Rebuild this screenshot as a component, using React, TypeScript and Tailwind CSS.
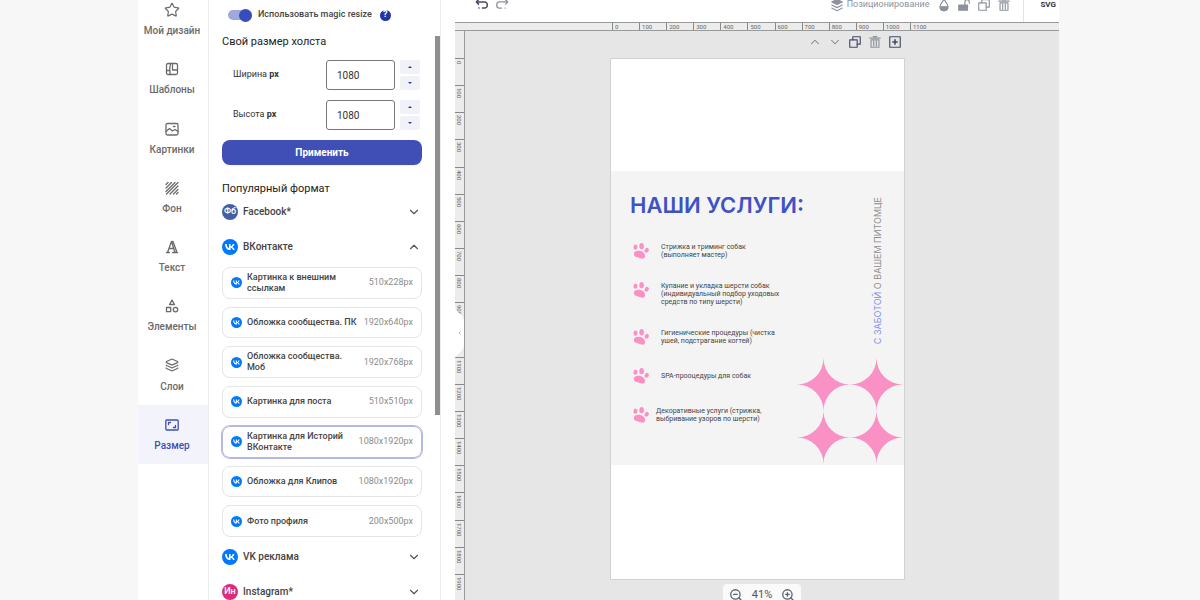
import { useState } from "react";
import type { ReactNode } from "react";
import { ChevronDown, ChevronUp, Layers, Star, ZoomIn, ZoomOut } from "lucide-react";

type Format = { title: string; size: string };

const vkFormats: Format[] = [
  { title: "Картинка к внешним\nссылкам", size: "510x228px" },
  { title: "Обложка сообщества. ПК", size: "1920x640px" },
  { title: "Обложка сообщества.\nМоб", size: "1920x768px" },
  { title: "Картинка для поста", size: "510x510px" },
  { title: "Картинка для Историй\nВКонтакте", size: "1080x1920px" },
  { title: "Обложка для Клипов", size: "1080x1920px" },
  { title: "Фото профиля", size: "200x500px" },
];

const services = [
  "Стрижка и триминг собак\n(выполняет мастер)",
  "Купание и укладка шерсти собак\n(индивидуальный подбор уходовых\nсредств по типу шерсти)",
  "Гигиенические процедуры (чистка\nушей, подстрагание когтей)",
  "SPA-прооцедуры для собак",
  "Декоративные услуги (стрижка,\nвыбривание узоров по шерсти)",
];

const columnTicks = Array.from({ length: 12 }, (_, i) => i * 100);
const rowTicks = Array.from({ length: 20 }, (_, i) => i * 100);

function Icon({ children, className = "size-4" }: { children: ReactNode; className?: string }) {
  return (
    <svg
      viewBox="0 0 16 16"
      className={className}
      fill="none"
      stroke="currentColor"
      strokeWidth="1.3"
      strokeLinecap="round"
      strokeLinejoin="round"
      aria-hidden="true"
    >
      {children}
    </svg>
  );
}

const menu = [
  { label: "Мой дизайн", icon: <Star className="size-4" strokeWidth={1.8} /> },
  {
    label: "Шаблоны",
    icon: (
      <Icon>
        <rect x="2.5" y="2.5" width="11" height="11" rx="1.5" />
        <path d="M8.5 2.5v6.500h5M6.500 2.500L5.500 9.500M2.500 9.500h3.500v4" />
      </Icon>
    ),
  },
  {
    label: "Картинки",
    icon: (
      <Icon>
        <rect x="2" y="2.5" width="12" height="11.5" rx="1.5" />
        <path d="M2 10.5l3.5-3 3 2.500 2.500-1.500 3 2" />
        <path d="M9.500 5.500h1.500" />
      </Icon>
    ),
  },
  {
    label: "Фон",
    icon: (
      <Icon>
        <path d="M2 4.500L4 2.500M2 8L7.500 2.500M2 11.500L11 2.500M2.500 14L14 2.500M6 14L14 6M9.500 14L14 9.500M12.500 14L14 12.500" />
      </Icon>
    ),
  },
  {
    label: "Текст",
    icon: (
      <Icon>
        <path d="M2.500 13.500h3M3.500 13.500L7.500 2.500h1.500L13 13.500M8.500 13.500h5M7.500 2.500L11 13.500M5 9.500h4.500" />
      </Icon>
    ),
  },
  {
    label: "Элементы",
    icon: (
      <Icon>
        <path d="M8 2L10.500 6.500h-5z" />
        <rect x="2.500" y="9.500" width="4.200" height="4.200" />
        <circle cx="11.500" cy="11.600" r="2.200" />
      </Icon>
    ),
  },
  { label: "Слои", icon: <Layers className="size-3.5" strokeWidth={2} /> },
  {
    label: "Размер",
    icon: (
      <Icon>
        <rect x="1.800" y="3" width="12.400" height="10" rx="1" />
        <path d="M4.500 7.500V5.500h2M11.500 8.500v2h-2" />
      </Icon>
    ),
  },
];

function CopyIcon({ className }: { className?: string }) {
  return (
    <Icon className={className}>
      <rect x="2" y="5.500" width="8.500" height="8.500" />
      <path d="M5.500 5.500V2h8.500v8.500h-3.500" />
    </Icon>
  );
}

function TrashIcon({ className }: { className?: string }) {
  return (
    <Icon className={className}>
      <path d="M2 3.500h12M6 1.800h4M3.500 5.500h9v8.500h-9zM6.500 7v5.500M9.500 7v5.500" />
    </Icon>
  );
}

function VkBadge({ className }: { className: string }) {
  return (
    <svg viewBox="0 0 24 24" className={`shrink-0 ${className}`} aria-hidden="true">
      <circle cx="12" cy="12" r="12" fill="#0077ff" />
      <path
        transform="translate(3.200 3.900) scale(.73)"
        fill="#fff"
        d="M12.790 17.290C5.950 17.290 2.060 12.610 1.900 4.810h3.420c.11 5.730 2.630 8.150 4.630 8.650V4.810h3.220v4.940c1.980-.21 4.060-2.460 4.760-4.940h3.230c-.54 3.060-2.800 5.310-4.410 6.240 1.610.75 4.180 2.720 5.160 6.240h-3.560c-.76-2.380-2.670-4.220-5.180-4.470v4.470z"
      />
    </svg>
  );
}

function Paw() {
  return (
    <svg viewBox="0 0 16 16" className="size-4 shrink-0" fill="#f991c5" aria-hidden="true">
      <ellipse cx="2.500" cy="4.200" rx="2" ry="2.600" transform="rotate(8 2.500 4.200)" />
      <ellipse cx="8.600" cy="3.200" rx="2.300" ry="3.100" transform="rotate(5 8.600 3.200)" />
      <ellipse cx="13.700" cy="7.300" rx="1.900" ry="2.500" transform="rotate(35 13.700 7.300)" />
      <path d="M.8 10.800C.8 8.500 3.500 7.500 6.300 7.800c3 .3 5.500 2.200 5.800 4.900.2 2.300-1.600 3.300-3.600 2.900-1.600-.3-2.600-1-4.100-1.300C2.300 13.900.8 13 .8 10.800z" />
    </svg>
  );
}

function Sparkles() {
  const centers = [
    [26.5, 26.5],
    [79.5, 26.5],
    [26.5, 79.5],
    [79.5, 79.5],
  ];
  return (
    <svg viewBox="0 0 106 106" className="w-[106px]" fill="#f991c5" aria-hidden="true">
      {centers.map(([x, y]) => (
        <path
          key={`${x}-${y}`}
          transform={`translate(${x} ${y})`}
          d="M0-26.500A26.500 26.500 0 0 0 26.500 0 26.500 26.500 0 0 0 0 26.500 26.500 26.500 0 0 0-26.500 0 26.500 26.500 0 0 0 0-26.500z"
        />
      ))}
    </svg>
  );
}

function SizeField({ id, label }: { id: string; label: string }) {
  const [value, setValue] = useState(1080);
  const stepClass = "flex h-3.5 w-5 items-center justify-center rounded-xs bg-[#f1f2f7]";

  return (
    <div className="flex items-center pr-0.5 pl-[11px]">
      <label htmlFor={id} className="flex-1 text-[9px] text-[#333]">
        {label} <b>px</b>
      </label>
      <input
        id={id}
        type="text"
        inputMode="numeric"
        value={value}
        onChange={(e) => setValue(Number(e.target.value) || 0)}
        className="h-[30px] w-[69px] rounded-[3px] border border-[#777] px-2.5 text-[10px] text-[#333]"
      />
      <div className="ml-[5px] flex flex-col gap-0.5">
        <button type="button" aria-label="Больше" className={stepClass} onClick={() => setValue(value + 1)}>
          <svg viewBox="0 0 4 2" className="w-1" fill="#2b3a8c">
            <path d="M0 2L2 0l2 2z" />
          </svg>
        </button>
        <button type="button" aria-label="Меньше" className={stepClass} onClick={() => setValue(value - 1)}>
          <svg viewBox="0 0 4 2" className="w-1" fill="#2b3a8c">
            <path d="M0 0l2 2 2-2z" />
          </svg>
        </button>
      </div>
    </div>
  );
}

function GroupRow({ badge, title, open = false }: { badge: ReactNode; title: string; open?: boolean }) {
  const Chevron = open ? ChevronUp : ChevronDown;
  return (
    <button
      type="button"
      aria-expanded={open}
      className="flex h-[35px] w-full items-center gap-[5px] pr-px text-left text-[10px] font-medium text-[#444]"
    >
      {badge}
      <span className="flex-1">{title}</span>
      <Chevron className="size-3.5 text-[#555]" strokeWidth={2} />
    </button>
  );
}

function Sidebar() {
  const [active, setActive] = useState("Размер");
  return (
    <nav className="w-[71px] shrink-0 border-r border-[#ececec]">
      {/* the menu is scrolled down a little */}
      <div className="-mt-2.5 grid h-[474px] grid-rows-8">
        {menu.map(({ label, icon }) => (
          <button
            key={label}
            type="button"
            onClick={() => setActive(label)}
            className={`flex flex-col items-center pt-3 pr-0.5 text-[10px] leading-4 font-medium ${
              label === active ? "bg-[#f3f4fb] text-[#3f4fb5]" : "text-[#6b6b6b]"
            }`}
          >
            <span className="flex h-[21px] items-start justify-center">{icon}</span>
            {label}
          </button>
        ))}
      </div>
    </nav>
  );
}

function SizePanel() {
  const [magic, setMagic] = useState(true);
  const [selected, setSelected] = useState(4);

  return (
    <section className="relative w-[232px] shrink-0 border-r border-[#ececec] pr-[18px] pl-[13px]">
      <div className="flex h-[30px] items-center pl-1.5">
        <label className="flex items-center gap-1.5 text-[9px] font-medium text-[#444]">
          <input
            type="checkbox"
            checked={magic}
            onChange={(e) => setMagic(e.target.checked)}
            className="peer sr-only"
          />
          <span className="flex h-2.5 w-6 items-center justify-end rounded-full bg-[#9fa8dc]">
            <span className="size-[13px] shrink-0 rounded-full bg-[#3a4cb8]" />
          </span>
          Использовать magic resize
        </label>
        <button
          type="button"
          aria-label="Справка"
          className="ml-2 flex size-[11px] items-center justify-center rounded-full bg-[#2433a8] text-[9px] font-bold text-white"
        >
          ?
        </button>
      </div>

      <h2 className="h-[30px] text-[11px] leading-6 text-[#222]">Свой размер холста</h2>
      <div className="flex flex-col gap-2.5">
        <SizeField id="width" label="Ширина" />
        <SizeField id="height" label="Высота" />
        <button
          type="button"
          className="h-[25px] rounded-lg bg-[#3f4fb5] text-[10px] font-bold text-white shadow-xs"
        >
          Применить
        </button>
      </div>

      <h2 className="mt-3 h-[17px] text-[11px] leading-6 text-[#222]">Популярный формат</h2>
      <GroupRow
        title="Facebook*"
        badge={
          <span className="flex size-4 items-center justify-center rounded-full bg-[#4460a5] text-[9px] font-medium text-white">
            Фб
          </span>
        }
      />
      <GroupRow title="ВКонтакте" open badge={<VkBadge className="size-4" />} />
      <div className="mt-[3px] mb-0.5 grid h-[270px] grid-cols-1 grid-rows-7 gap-2">
        {vkFormats.map(({ title, size }, i) => (
          <button
            key={title}
            type="button"
            onClick={() => setSelected(i)}
            className={`flex items-center gap-[5px] rounded-lg border px-2 text-left text-[9px] leading-[11px] ${
              i === selected ? "border-[#b3b9e2] ring-1 ring-[#b3b9e2]" : "border-[#e4e4e4]"
            }`}
          >
            <VkBadge className="size-[11px]" />
            <span className="flex-1 whitespace-pre font-medium text-[#444]">{title}</span>
            <span className="text-[#8c8c8c]">{size}</span>
          </button>
        ))}
      </div>
      <GroupRow title="VK реклама" badge={<VkBadge className="size-4" />} />
      <GroupRow
        title="Instagram*"
        badge={
          <span className="flex size-4 items-center justify-center rounded-full bg-[#d92d80] text-[9px] font-medium text-white">
            Ин
          </span>
        }
      />

      <div className="absolute top-9 right-0 h-[379px] w-[5px] bg-[#8f8f8f]" />
    </section>
  );
}

function Toolbar() {
  return (
    <header className="-mt-3 flex h-[34px] items-center bg-white pl-5 text-[#8d929c]">
      <button type="button" aria-label="Отменить" className="text-[#454b66]">
        <Icon className="size-3.5">
          <path d="M4 2L1.500 4.500 4 7M1.500 4.500h9.500a3 3 0 0 1 3 3v1a3 3 0 0 1-3 3H8.500M4.500 11.500h.1" strokeWidth="1.700" />
        </Icon>
      </button>
      <button type="button" aria-label="Повторить" className="ml-1.5">
        <Icon className="size-3.5">
          <path d="M12 2l2.500 2.500L12 7M14.500 4.500H5a3 3 0 0 0-3 3v1a3 3 0 0 0 3 3h2.500M11.500 11.500h.1" strokeWidth="1.500" />
        </Icon>
      </button>
      <div className="ml-auto flex h-full items-center gap-1.5 pr-3">
        <button type="button" className="flex items-center gap-[3px] pr-0.5 text-[9px]">
          <Icon className="size-3.5">
            <path d="M8 1.500L14 4.500 8 7.500 2 4.500z" fill="currentColor" />
            <path d="M2 8l6 3 6-3M2 11.500l6 3 6-3" />
          </Icon>
          Позиционирование
        </button>
        <button type="button" aria-label="Прозрачность">
          <Icon className="size-3.5">
            <path d="M8 1.500C6 4.500 3.500 7 3.500 10a4.500 4.500 0 0 0 9 0C12.500 7 10 4.500 8 1.500z" />
            <path d="M3.500 10h9c0 3-2 4.500-4.500 4.500s-4.500-1.500-4.500-4.500z" fill="currentColor" />
          </Icon>
        </button>
        <button type="button" aria-label="Заблокировать">
          <Icon className="size-3.5">
            <rect x="2" y="8" width="10" height="6" fill="currentColor" />
            <path d="M9 8V4.500a2.500 2.500 0 0 1 5 0V6" />
          </Icon>
        </button>
        <button type="button" aria-label="Копировать">
          <CopyIcon className="size-3.5" />
        </button>
        <button type="button" aria-label="Удалить">
          <TrashIcon className="size-3.5" />
        </button>
      </div>
      <button
        type="button"
        className="h-full border-l border-[#e4e4e4] pr-[3px] pl-4 text-[8px] font-bold text-[#333]"
      >
        SVG
      </button>
    </header>
  );
}

function Poster() {
  return (
    <div className="relative h-[294px] bg-[#f4f4f4] pt-6 pl-[19px]">
      <h1 className="font-[Inter,sans-serif] text-[22px] leading-5 font-semibold text-[#3f52c4]">НАШИ УСЛУГИ:</h1>
      <ul className="mt-7 flex flex-col gap-[23px] pl-[3px]">
        {services.map((text, i) => (
          <li key={text} className={`flex items-start ${i === services.length - 1 ? "gap-[7px]" : "gap-3"}`}>
            <Paw />
            <p className="flex min-h-4 items-center text-[7px] leading-[8px] whitespace-pre text-[#444]">{text}</p>
          </li>
        ))}
      </ul>
      <p className="absolute top-[26px] right-5 rotate-180 font-[Inter,sans-serif] text-[9px] leading-3 whitespace-nowrap text-[#8c8c8c] [writing-mode:vertical-rl]">
        <span className="text-[#7f90e4]">С ЗАБОТОЙ</span> О ВАШЕМ ПИТОМЦЕ
      </p>
      <div className="absolute right-px bottom-px">
        <Sparkles />
      </div>
    </div>
  );
}

function Editor() {
  return (
    <main className="flex min-w-0 flex-1 flex-col bg-[#e6e6e6]">
      <Toolbar />
      <div className="flex h-[9px] shrink-0 border-y border-[#999] bg-[#ececec] pl-[157px]">
        <div className="grid w-[325px] grid-cols-12">
          {columnTicks.map((tick) => (
            <span key={tick} className="border-l border-[#888] pl-0.5 text-[6px] leading-[7px] text-[#666]">
              {tick}
            </span>
          ))}
        </div>
      </div>
      <div className="flex min-h-0 flex-1">
        <div className="relative w-2.5 shrink-0 border-r border-[#999] bg-[#ececec] pt-[27px]">
          <div className="grid h-[543px] grid-rows-20">
            {rowTicks.map((tick) => (
              <span
                key={tick}
                className="border-t border-[#888] pt-0.5 text-[6px] leading-[9px] text-[#666] [writing-mode:vertical-rl]"
              >
                {tick}
              </span>
            ))}
          </div>
          <button type="button" aria-label="Свернуть панель" className="absolute top-[277px] left-0">
            <svg viewBox="0 0 10 50" className="w-2.5" fill="none">
              <path d="M0 0c1 4 9 6 9 14v22c0 8-8 10-9 14z" fill="#fff" />
              <path d="M5.500 23.500L4 25l1.500 1.500" stroke="#aaa" strokeWidth=".8" />
            </svg>
          </button>
        </div>
        <div className="relative min-w-0 flex-1 pl-[145px]">
          <div className="w-[295px]">
            <div className="flex h-[27px] items-center justify-end gap-1.5 pr-[3px] pb-1.5 text-[#454b66]">
              <button type="button" aria-label="Выше">
                <ChevronUp className="size-3.5 text-[#7d8290]" strokeWidth={1.8} />
              </button>
              <button type="button" aria-label="Ниже">
                <ChevronDown className="size-3.5 text-[#7d8290]" strokeWidth={1.8} />
              </button>
              <button type="button" aria-label="Дублировать страницу">
                <CopyIcon className="size-3.5" />
              </button>
              <button type="button" aria-label="Удалить страницу" className="text-[#8d929c]">
                <TrashIcon className="size-3.5" />
              </button>
              <button type="button" aria-label="Добавить страницу">
                <Icon className="size-3.5">
                  <rect x="2" y="2" width="12" height="12" />
                  <path d="M8 5.500v5M5.500 8h5" strokeWidth="1.800" />
                </Icon>
              </button>
            </div>
            <div className="h-[522px] border border-[#d2d2d2] bg-white pt-28">
              <Poster />
            </div>
          </div>
          <div className="absolute bottom-0 left-1/2 flex h-4 w-[78px] -translate-x-1/2 items-center justify-between overflow-hidden rounded-t bg-[#fafafa] px-1.5 pt-1.5 text-[11px] text-[#555]">
            <button type="button" aria-label="Уменьшить">
              <ZoomOut className="size-3.5 text-[#5c6370]" strokeWidth={2.2} />
            </button>
            41%
            <button type="button" aria-label="Увеличить">
              <ZoomIn className="size-3.5 text-[#5c6370]" strokeWidth={2.2} />
            </button>
          </div>
        </div>
      </div>
    </main>
  );
}

export default function App() {
  return (
    <div className="h-screen overflow-hidden bg-[#f7f7f7] pr-[141px] pl-[138px] font-[Roboto,sans-serif]">
      <div className="flex h-full bg-white">
        <Sidebar />
        <SizePanel />
        <div className="w-3.5 shrink-0" />
        <Editor />
      </div>
    </div>
  );
}
